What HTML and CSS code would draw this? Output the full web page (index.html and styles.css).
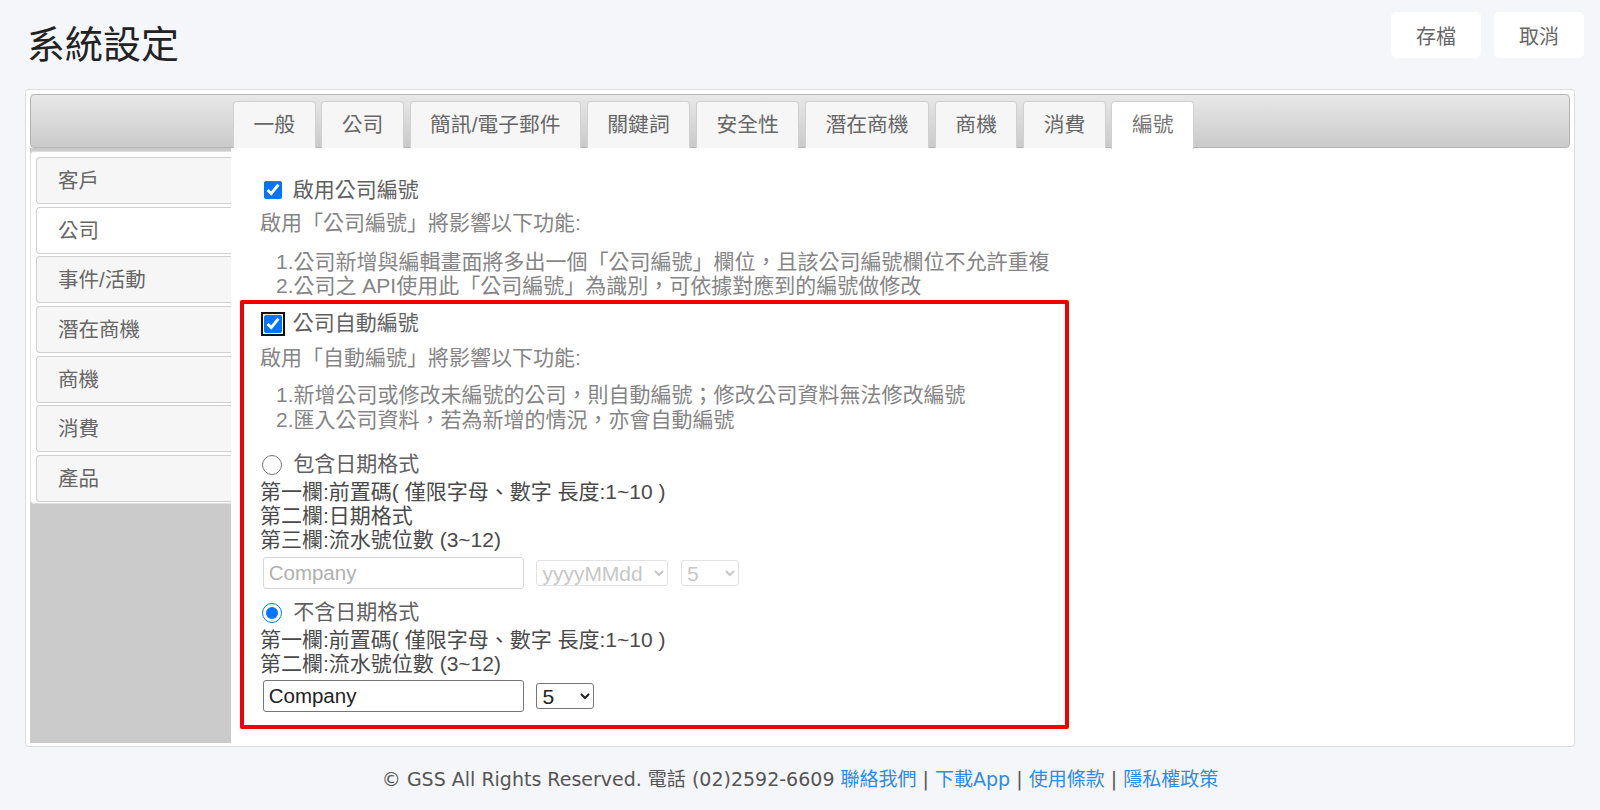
FILE: index.html
```html
<!DOCTYPE html>
<html lang="zh-Hant">
<head>
  <meta charset="UTF-8">
  <meta name="viewport" content="width=device-width, initial-scale=1.0">
  <title>系統設定</title>
  <link rel="stylesheet" href="styles.css">
</head>
<body>
  <div class="topbar">
    <h1 class="page-title">系統設定</h1>
    <div class="actions">
      <button class="btn">存檔</button>
      <button class="btn">取消</button>
    </div>
  </div>

  <div class="panel">
    <ul class="tabs">
      <li>一般</li>
      <li>公司</li>
      <li>簡訊/電子郵件</li>
      <li>關鍵詞</li>
      <li>安全性</li>
      <li>潛在商機</li>
      <li>商機</li>
      <li>消費</li>
      <li class="active">編號</li>
    </ul>

    <div class="panel-body">
      <div class="side">
        <ul class="side-tabs">
          <li>客戶</li>
          <li class="active">公司</li>
          <li>事件/活動</li>
          <li>潛在商機</li>
          <li>商機</li>
          <li>消費</li>
          <li>產品</li>
        </ul>
      </div>

      <div class="content">
        <label class="check-row">
          <input type="checkbox" checked>
          <span>啟用公司編號</span>
        </label>
        <p class="desc">啟用「公司編號」將影響以下功能:</p>
        <ol class="notes">
          <li>1.公司新增與編輯畫面將多出一個「公司編號」欄位，且該公司編號欄位不允許重複</li>
          <li>2.公司之 API使用此「公司編號」為識別，可依據對應到的編號做修改</li>
        </ol>

        <div class="highlight">
          <label class="check-row">
            <input type="checkbox" class="focused" checked>
            <span>公司自動編號</span>
          </label>
          <p class="desc desc-auto">啟用「自動編號」將影響以下功能:</p>
          <ol class="notes notes-auto">
            <li>1.新增公司或修改未編號的公司，則自動編號；修改公司資料無法修改編號</li>
            <li>2.匯入公司資料，若為新增的情況，亦會自動編號</li>
          </ol>

          <label class="radio-row first">
            <input type="radio" name="fmt">
            <span>包含日期格式</span>
          </label>
          <div class="fields">
            <div>第一欄:前置碼( 僅限字母、數字 長度:1~10 )</div>
            <div>第二欄:日期格式</div>
            <div>第三欄:流水號位數 (3~12)</div>
          </div>
          <div class="inputs">
            <input type="text" class="prefix" value="Company" disabled>
            <select class="sel-date" disabled><option>yyyyMMdd</option></select>
            <select class="sel-num" disabled><option>5</option></select>
          </div>

          <label class="radio-row second">
            <input type="radio" name="fmt" checked>
            <span>不含日期格式</span>
          </label>
          <div class="fields">
            <div>第一欄:前置碼( 僅限字母、數字 長度:1~10 )</div>
            <div>第二欄:流水號位數 (3~12)</div>
          </div>
          <div class="inputs inputs-last">
            <input type="text" class="prefix" value="Company">
            <select class="sel-num"><option>5</option></select>
          </div>
        </div>
      </div>
    </div>
  </div>

  <div class="footer">
    © GSS All Rights Reserved. 電話 (02)2592-6609
    <a href="#">聯絡我們</a> | <a href="#">下載App</a> | <a href="#">使用條款</a> | <a href="#">隱私權政策</a>
  </div>
</body>
</html>
```

FILE: styles.css
```css
* { box-sizing: border-box; }
body {
  margin: 0;
  background: #f5f6fa;
  font-family: 'Liberation Sans', 'Noto Sans CJK TC', sans-serif;
  color: #555;
}

/* top bar */
.topbar {
  display: flex;
  justify-content: space-between;
  align-items: flex-start;
  height: 89px;
  padding: 12px 16px 0 27px;
}
.page-title {
  margin: 10px 0 0;
  font-size: 38px;
  line-height: 46px;
  font-weight: 400;
  color: #222;
}
.actions {
  display: flex;
  gap: 13px;
}
.btn {
  width: 90px;
  height: 46px;
  border: none;
  border-radius: 5px;
  background: #fff;
  color: #666;
  font-family: inherit;
  font-size: 20px;
  cursor: pointer;
}

/* panel + tabs */
.panel {
  margin: 0 25px;
  padding: 4px 4px 3px;
  background: #fff;
  border: 1px solid #dcdcdc;
  border-radius: 4px;
}
.tabs {
  display: flex;
  gap: 5.7px;
  height: 54px;
  margin: 0;
  padding: 6px 0 0 202px;
  list-style: none;
  background: linear-gradient(#e8e8e8, #cacaca);
  border: 1px solid #b4b4b4;
  border-radius: 4px;
}
.tabs li {
  height: 47px;
  padding: 0 19.5px;
  line-height: 45px;
  font-size: 20.8px;
  color: #666;
  background: #f6f6f6;
  border: 1px solid #d0d0d0;
  border-bottom: none;
  border-radius: 4px 4px 0 0;
}
.tabs li.active {
  height: 48px;
  background: #fff;
  color: #777;
  position: relative;
  z-index: 1;
}

.panel-body {
  display: flex;
  height: 595px;
}
.side {
  width: 201px;
  background: #cbcbcb;
}
.side-tabs {
  margin: 3px 0 0;
  padding: 5px 0 1px 5px;
  list-style: none;
  background: #fff;
  border: 1px solid #dedede;
  border-right: none;
  border-radius: 4px 0 0 4px;
}
.side-tabs li {
  height: 47px;
  margin-bottom: 2.7px;
  padding-left: 21px;
  line-height: 45px;
  font-size: 20.5px;
  color: #666;
  background: #f6f6f6;
  border: 1px solid #d0d0d0;
  border-right: none;
  border-radius: 4px 0 0 4px;
}
.side-tabs li:last-child { margin-bottom: 0; }
.side-tabs li.active { background: #fff; }

/* settings content */
.content {
  flex: 1;
  padding: 30px 0 0 29px;
  font-size: 21px;
  line-height: 24.5px;
  color: #858585;
}
.check-row,
.radio-row {
  display: flex;
  align-items: center;
  height: 24px;
  color: #606060;
}
.check-row input {
  width: 18px;
  height: 18px;
  margin: 0 11.3px 0 3.5px;
  accent-color: #0075ff;
}
.check-row input.focused {
  outline: 2.5px solid #111;
  outline-offset: 1px;
  border-radius: 4px;
}
.desc {
  margin: 8.5px 0 0;
}
.notes {
  margin: 14.5px 0 0;
  padding: 0 0 0 16px;
  list-style: none;
}

.highlight {
  width: 829px;
  margin: 1px 0 0 -20px;
  padding: 8px 0 13px 16px;
  border: 4px solid #f20000;
  border-radius: 2px;
}
.desc-auto { margin-top: 10.5px; }
.notes-auto { margin-top: 12.5px; }

.radio-row input {
  width: 19.4px;
  height: 19.4px;
  margin: 2px 11.6px 0 2.3px;
  accent-color: #0075ff;
}
.radio-row.first { margin-top: 20px; }
.radio-row.second { margin-top: 11px; }
.fields {
  margin-top: 4px;
  line-height: 24px;
  color: #4a4a4a;
}
.inputs {
  display: flex;
  align-items: center;
  gap: 12.7px;
  margin: 4.7px 0 0 2.7px;
}
.inputs-last { margin-top: 4px; }
.prefix {
  width: 261px;
  height: 32.3px;
  margin: 0;
  padding: 0 5px;
  font-family: inherit;
  font-size: 20.5px;
  color: #222;
  border: 1px solid #767676;
  border-radius: 3px;
  background: #fff;
}
.prefix:disabled {
  color: #b0b0b0;
  border-color: #d6d6d6;
  background: #fff;
}
select {
  height: 26.4px;
  margin: 0;
  padding: 0 1px;
  font-family: inherit;
  font-size: 21px;
  color: #222;
  border: 1px solid #767676;
  border-radius: 3px;
  background: #fff;
}
select:disabled {
  color: #b0b0b0;
  border-color: #d6d6d6;
}
.sel-date { width: 132px; }
.sel-num { width: 58px; }

/* footer */
.footer {
  margin-top: 20px;
  text-align: center;
  font-family: 'DejaVu Sans', 'Noto Sans CJK TC', sans-serif;
  font-size: 19px;
  line-height: 24px;
  color: #555;
}
.footer a {
  color: #2f8ae5;
  text-decoration: none;
}
```
